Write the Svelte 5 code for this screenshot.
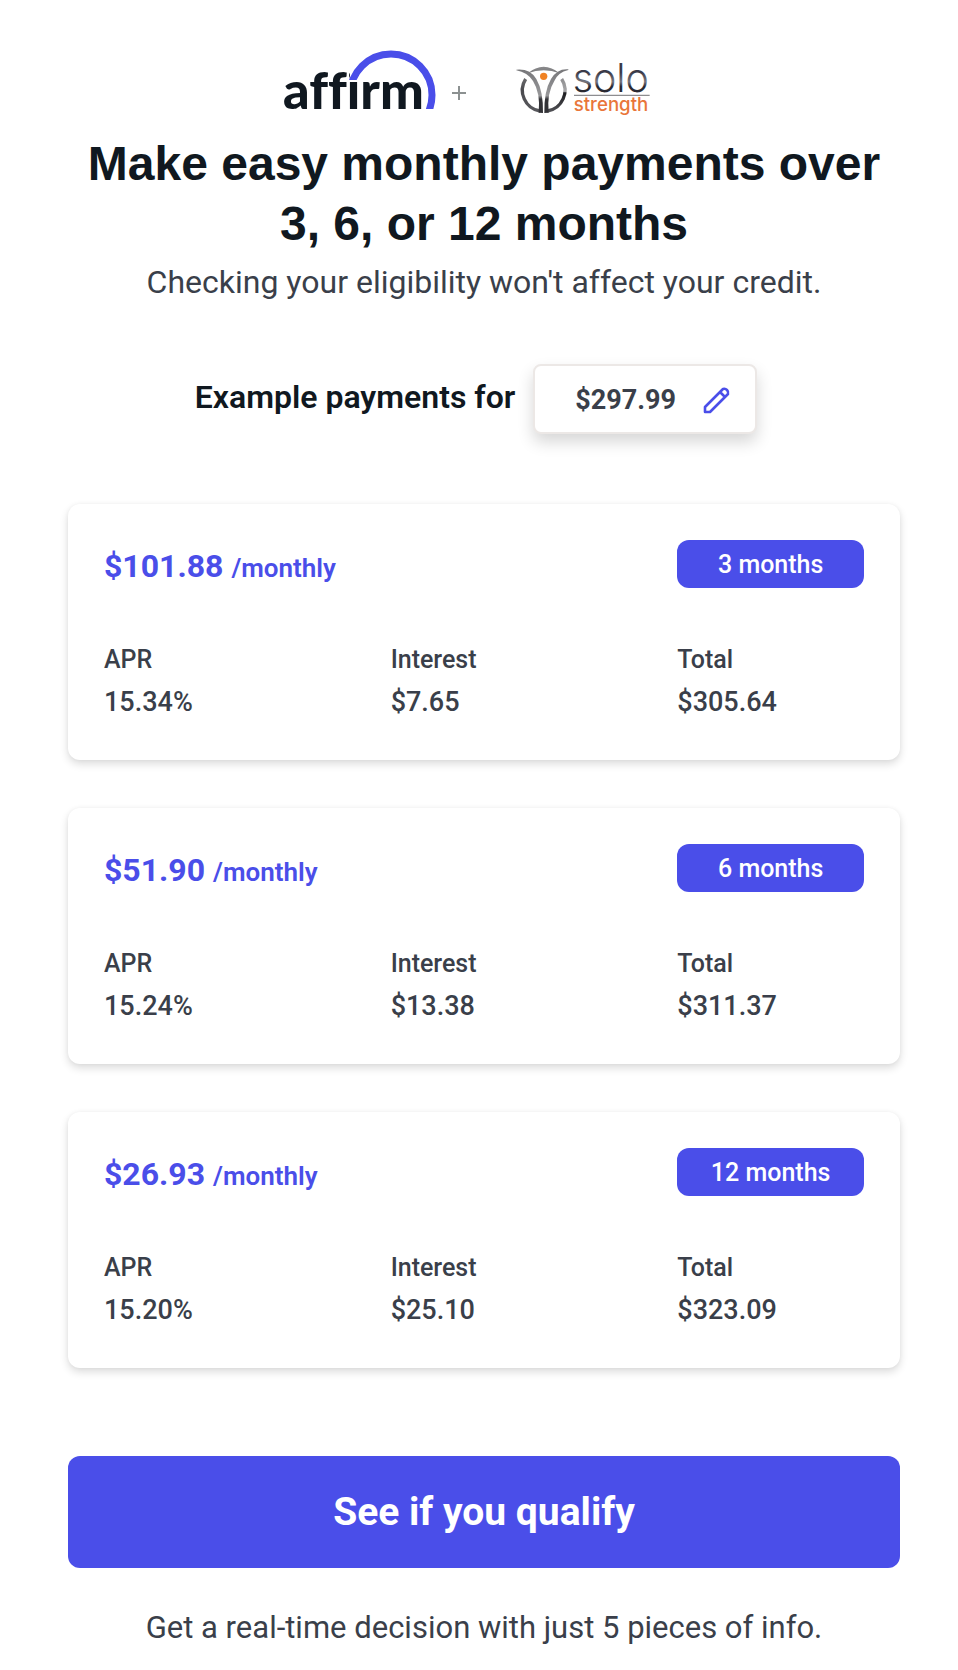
<script lang="ts">
  interface Plan {
    months: number;
    payment: string;
    apr: string;
    interest: string;
    total: string;
  }

  const amount = '$297.99';

  const plans: Plan[] = [
    { months: 3, payment: '$101.88', apr: '15.34%', interest: '$7.65', total: '$305.64' },
    { months: 6, payment: '$51.90', apr: '15.24%', interest: '$13.38', total: '$311.37' },
    { months: 12, payment: '$26.93', apr: '15.20%', interest: '$25.10', total: '$323.09' }
  ];
</script>

<main class="modal">
  <header>
    <div class="logos">
      <svg class="affirm-logo" width="154" height="64" viewBox="281 48 154 64" role="img" aria-label="Affirm">
        <clipPath id="arc-clip">
          <path d="M340 40H440V109H410V80H340Z" />
        </clipPath>
        <text class="affirm-word" x="282" y="109">affirm</text>
        <path d="M349 66H362V82H349Z" fill="#fff" />
        <circle cx="390" cy="95" r="41" fill="none" stroke="#4a4ee9" stroke-width="7" clip-path="url(#arc-clip)" />
      </svg>
      <svg class="plus" width="14" height="14" viewBox="0 0 14 14" aria-hidden="true">
        <path d="M7 0V14M0 7H14" stroke="#8c9191" stroke-width="2" />
      </svg>
      <svg class="solo-logo" width="135" height="56" viewBox="50 29 405 168" role="img" aria-label="Solo Strength">
        <defs>
          <linearGradient id="ring" gradientUnits="userSpaceOnUse" x1="0" y1="50" x2="0" y2="188">
            <stop offset="0" stop-color="#8a8a8c" />
            <stop offset="0.5" stop-color="#4a4a4e" />
            <stop offset="1" stop-color="#5a5a5e" />
          </linearGradient>
          <linearGradient id="arm" gradientUnits="userSpaceOnUse" x1="0" y1="58" x2="0" y2="188">
            <stop offset="0" stop-color="#77777a" />
            <stop offset="0.6" stop-color="#98989a" />
            <stop offset="0.68" stop-color="#333337" />
            <stop offset="1" stop-color="#333337" />
          </linearGradient>
          <linearGradient id="ring-right" gradientUnits="userSpaceOnUse" x1="0" y1="80" x2="0" y2="188">
            <stop offset="0" stop-color="#8a8a8c" />
            <stop offset="0.4" stop-color="#a8a8aa" />
            <stop offset="0.44" stop-color="#1d1d20" />
            <stop offset="1" stop-color="#55555a" />
          </linearGradient>
          <linearGradient id="solo-fill" x1="0" y1="0" x2="0" y2="1">
            <stop offset="0.4" stop-color="#3a3a48" />
            <stop offset="0.6" stop-color="#77777f" />
            <stop offset="0.7" stop-color="#2a2a33" />
          </linearGradient>
        </defs>
        <path d="M85 69Q133 30 181 69Q133 50 85 69Z" fill="url(#ring)" />
        <path d="M79 86A63 63 0 0 0 122 182" fill="none" stroke="url(#ring)" stroke-width="10" />
        <path d="M187 86A63 63 0 0 1 144 182" fill="none" stroke="url(#ring-right)" stroke-width="10" />
        <path d="M51 58Q92 54 111 86Q132 122 131 188L118 187Q124 128 101 92Q84 66 51 60Z" fill="url(#arm)" />
        <path d="M207 57Q174 54 155 86Q134 122 135 188L148 187Q142 128 165 92Q176 66 207 59Z" fill="url(#arm)" />
        <circle cx="133" cy="78" r="11" fill="#f08223" />
        <text class="solo-word" x="220" y="124">solo</text>
        <path d="M224 135H451" stroke="#8d8d90" stroke-width="4" />
        <text class="strength-word" x="223" y="182">strength</text>
      </svg>
    </div>
    <h1>Make easy monthly payments over 3, 6, or 12 months</h1>
    <p class="note">Checking your eligibility won't affect your credit.</p>
  </header>

  <div class="example">
    <span class="example-label" id="amount-label">Example payments for</span>
    <button class="amount" type="button" aria-describedby="amount-label">
      {amount}
      <svg width="28" height="28" viewBox="0 0 28 28" aria-hidden="true">
        <path d="M2 26V21L20 3A4 4 0 0 1 25 8L7 26ZM17 6L22 11" fill="none" stroke="#4a4ee9" stroke-width="2.6" stroke-linejoin="round" />
      </svg>
    </button>
  </div>

  <section class="plans">
    {#each plans as plan}
      <article class="plan">
        <div class="plan-top">
          <p class="payment">{plan.payment} <span>/monthly</span></p>
          <span class="term">{plan.months} months</span>
        </div>
        <dl>
          <div>
            <dt>APR</dt>
            <dd>{plan.apr}</dd>
          </div>
          <div>
            <dt>Interest</dt>
            <dd>{plan.interest}</dd>
          </div>
          <div>
            <dt>Total</dt>
            <dd>{plan.total}</dd>
          </div>
        </dl>
      </article>
    {/each}
  </section>

  <button class="qualify" type="button">See if you qualify</button>
  <p class="footnote">Get a real-time decision with just 5 pieces of info.</p>
</main>

<style>
  :global(body) {
    margin: 0;
    background: #fff;
  }

  .modal {
    padding: 48px 58px 20px 68px;
    font-family: Roboto, 'Liberation Sans', sans-serif;
    color: #3a3f4a;
  }

  h1,
  p,
  dl,
  dd {
    margin: 0;
  }

  button {
    font-family: inherit;
    cursor: pointer;
  }

  header {
    text-align: center;
  }

  /* Logos */
  .logos {
    display: flex;
    align-items: flex-start;
    justify-content: center;
    height: 68px;
    padding-right: 36px;
  }

  .logos svg {
    overflow: visible;
  }

  .plus {
    margin: 38px 50px 0 16px;
  }

  .solo-logo {
    margin-top: 12px;
  }

  .affirm-word {
    font-family: Lato, sans-serif;
    font-size: 52px;
    font-weight: 900;
    font-variant-ligatures: none;
    fill: #101820;
  }

  .solo-word {
    font-family: Inter, sans-serif;
    font-size: 118px;
    font-weight: 300;
    fill: url(#solo-fill);
  }

  .strength-word {
    font-family: Inter, sans-serif;
    font-size: 56px;
    font-weight: 500;
    fill: #e9763a;
  }

  h1 {
    margin-top: 18px;
    font-family: 'Liberation Sans', Arial, sans-serif;
    font-size: 48px;
    font-weight: 700;
    line-height: 60px;
    color: #101820;
  }

  .note {
    margin-top: 8px;
    font-size: 32px;
    line-height: 40px;
  }

  /* Purchase amount */
  .example {
    display: flex;
    align-items: center;
    justify-content: center;
    gap: 18px;
    margin-top: 62px;
    padding-right: 16px;
  }

  .example-label {
    padding-bottom: 4px;
    font-size: 32px;
    font-weight: 600;
    color: #101820;
  }

  .amount {
    display: flex;
    align-items: center;
    justify-content: space-between;
    width: 224px;
    height: 70px;
    padding: 2px 24px 0 40px;
    border: 2px solid #ece8e6;
    border-radius: 8px;
    background: #fff;
    box-shadow: 0 8px 16px rgba(0, 0, 0, 0.16);
    font-size: 27px;
    font-weight: 700;
    color: #3a3f4a;
  }

  /* Payment plans */
  .plans {
    display: grid;
    gap: 48px;
    margin-top: 70px;
  }

  .plan {
    padding: 36px;
    border-radius: 12px;
    background: #fff;
    box-shadow: 0 4px 8px rgba(0, 0, 0, 0.14), 0 0 4px rgba(0, 0, 0, 0.04);
  }

  .plan-top,
  dl {
    display: grid;
    grid-template-columns: repeat(3, 1fr);
    column-gap: 100px;
  }

  .payment {
    grid-column: span 2;
    font-size: 32px;
    font-weight: 700;
    line-height: 52px;
    color: #4a4ee9;
  }

  .payment span {
    font-size: 26px;
    font-weight: 600;
    line-height: 1;
  }

  .term {
    height: 48px;
    border-radius: 12px;
    background: #4a4ee9;
    font-size: 25px;
    font-weight: 500;
    line-height: 50px;
    text-align: center;
    color: #fff;
  }

  dl {
    margin-top: 48px;
  }

  dt {
    font-size: 25px;
    font-weight: 500;
    line-height: 40px;
  }

  dd {
    font-size: 27px;
    font-weight: 500;
    line-height: 44px;
  }

  .qualify {
    display: block;
    width: 100%;
    height: 112px;
    margin-top: 88px;
    border: none;
    border-radius: 12px;
    background: #4a4ee9;
    font-size: 39px;
    font-weight: 700;
    color: #fff;
  }

  .footnote {
    margin-top: 40px;
    font-size: 31px;
    line-height: 40px;
    text-align: center;
  }
</style>
